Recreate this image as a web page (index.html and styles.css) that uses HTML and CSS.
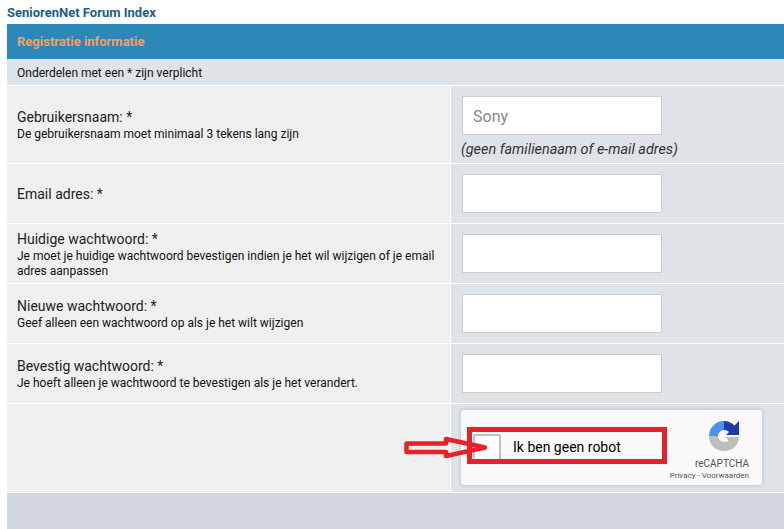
FILE: index.html
```html
<!DOCTYPE html>
<html>
<head>
    <title>Registratie informatie</title>
    <link rel="stylesheet" href="styles.css">
</head>
<body>
    <div class="crumb">SeniorenNet Forum Index</div>

    <div class="panel">
        <div class="panel-head">Registratie informatie</div>
        <div class="panel-note">Onderdelen met een * zijn verplicht</div>

        <div class="row row-name">
            <div class="cell-left">
                <div class="label">Gebruikersnaam: *</div>
                <div class="hint">De gebruikersnaam moet minimaal 3 tekens lang zijn</div>
            </div>
            <div class="cell-right">
                <input class="field" type="text" value="Sony">
                <div class="field-note">(geen familienaam of e-mail adres)</div>
            </div>
        </div>

        <div class="row">
            <div class="cell-left">
                <div class="label">Email adres: *</div>
            </div>
            <div class="cell-right">
                <input class="field" type="text">
            </div>
        </div>

        <div class="row">
            <div class="cell-left">
                <div class="label">Huidige wachtwoord: *</div>
                <div class="hint">Je moet je huidige wachtwoord bevestigen indien je het wil wijzigen of je email adres aanpassen</div>
            </div>
            <div class="cell-right">
                <input class="field" type="password">
            </div>
        </div>

        <div class="row">
            <div class="cell-left">
                <div class="label">Nieuwe wachtwoord: *</div>
                <div class="hint">Geef alleen een wachtwoord op als je het wilt wijzigen</div>
            </div>
            <div class="cell-right">
                <input class="field" type="password">
            </div>
        </div>

        <div class="row">
            <div class="cell-left">
                <div class="label">Bevestig wachtwoord: *</div>
                <div class="hint">Je hoeft alleen je wachtwoord te bevestigen als je het verandert.</div>
            </div>
            <div class="cell-right">
                <input class="field" type="password">
            </div>
        </div>

        <div class="row row-captcha">
            <div class="cell-left"></div>
            <div class="cell-right">
                <div class="captcha">
                    <div class="captcha-box"></div>
                    <div class="captcha-text">Ik ben geen robot</div>
                    <div class="captcha-brand">
                        <svg class="captcha-logo" width="32" height="32" viewBox="0 0 32 32">
                            <path d="M16 1 A15 15 0 0 0 1 16 L10 16 C10 13 13 10 16 10 Z" fill="#4a90f5"/>
                            <path d="M16 1 L16 10 C18 10 19.5 10.5 21 12 L18 15 L31 15 L31 1 L26.5 5.5 C23.8 2.8 20 1 16 1 Z" fill="#1c3aa9"/>
                            <path d="M1 16 L10 16 C10 19 13 22 16 22 C18 22 19.5 21.5 20.5 20.5 L17 17 L31 17 C31 25 24.5 31 16 31 C7.5 31 1 24.5 1 16 Z" fill="#bdbdbd"/>
                        </svg>
                        <div class="captcha-name">reCAPTCHA</div>
                        <div class="captcha-links">Privacy - Voorwaarden</div>
                    </div>
                </div>
            </div>
        </div>

        <div class="panel-foot"></div>
    </div>

    <!-- rode markering bovenop de captcha -->
    <div class="mark-box"></div>
    <svg class="mark-arrow" width="100" height="24" viewBox="0 0 100 24">
        <path d="M2.5 7.5 L42 7.5 L42 3 L81 11.5 L42 20 L42 16 L2.5 16 Z" fill="none" stroke="#e8202a" stroke-width="4.5" stroke-linejoin="round"/>
    </svg>
</body>
</html>
```

FILE: styles.css
```css
html, body {
    height: 529px;
    overflow: hidden;
}

body {
    margin: 0;
    font-family: Roboto, "Liberation Sans", Arial, sans-serif;
    background-color: #fff;
    color: #222;
    position: relative;
}

.crumb {
    height: 24px;
    line-height: 26px;
    padding-left: 7px;
    font-size: 13px;
    font-weight: 700;
    color: #1a5f8a;
}

.panel {
    margin-left: 7px;
    background-color: #fff;
}

.panel-head {
    height: 35px;
    line-height: 36px;
    padding-left: 10px;
    font-size: 13px;
    font-weight: 700;
    color: #eca169;
    background-color: #2b88b8;
}

.panel-note {
    height: 26px;
    line-height: 28px;
    padding-left: 10px;
    font-size: 12px;
    color: #111;
    background-color: #dee3e7;
    margin-bottom: 1px;
}

.row {
    display: flex;
    height: 59px;
    margin-bottom: 1px;
}

.row-name {
    height: 77px;
}

.row-captcha {
    height: 88px;
}

.cell-left {
    width: 443px;
    flex-shrink: 0;
    box-sizing: border-box;
    padding: 2px 10px 0;
    margin-right: 1px;
    background-color: #efefef;
    display: flex;
    flex-direction: column;
    justify-content: center;
}

.cell-right {
    flex: 1;
    padding: 10px 0 0 11px;
    background-color: #dee3e7;
}

.label {
    font-size: 14px;
    line-height: 16px;
    margin-bottom: 2px;
}

.hint {
    font-size: 12px;
    line-height: 15px;
    color: #111;
}

.field {
    display: block;
    box-sizing: border-box;
    width: 200px;
    height: 39px;
    margin: 0;
    padding: 1px 10px 0;
    font-family: Roboto, "Liberation Sans", Arial, sans-serif;
    font-size: 16px;
    color: #888;
    background-color: #fff;
    border: 1px solid #ccc;
}

.field-note {
    margin-top: 6px;
    margin-left: -1px;
    font-size: 14.4px;
    font-style: italic;
    color: #333;
}

.captcha {
    display: flex;
    align-items: center;
    box-sizing: border-box;
    width: 301px;
    height: 75px;
    margin-top: -4px;
    margin-left: -1px;
    padding-left: 12px;
    background-color: #f9f9f9;
    border-radius: 3px;
    box-shadow: 0 0 4px rgba(0, 0, 0, 0.18);
}

.captcha-box {
    width: 24px;
    height: 24px;
    background-color: #fff;
    border: 2px solid #c1c1c1;
    border-radius: 2px;
}

.captcha-text {
    margin-left: 12px;
    margin-bottom: 2px;
    font-size: 14px;
    color: #000;
}

.captcha-brand {
    margin-left: auto;
    padding: 5px 13px 0 0;
    display: flex;
    flex-direction: column;
    align-items: flex-end;
    color: #555;
}

.captcha-logo {
    margin-right: 9px;
}

.captcha-name {
    margin-top: 5px;
    font-size: 10px;
    line-height: 13px;
}

.captcha-links {
    font-size: 8px;
    line-height: 11px;
}

.panel-foot {
    height: 40px;
    background-color: #d1d7dc;
}

.mark-box {
    position: absolute;
    left: 467px;
    top: 427px;
    width: 190px;
    height: 27px;
    border: 5px solid #e8202a;
}

.mark-arrow {
    position: absolute;
    left: 404px;
    top: 436px;
}
```
